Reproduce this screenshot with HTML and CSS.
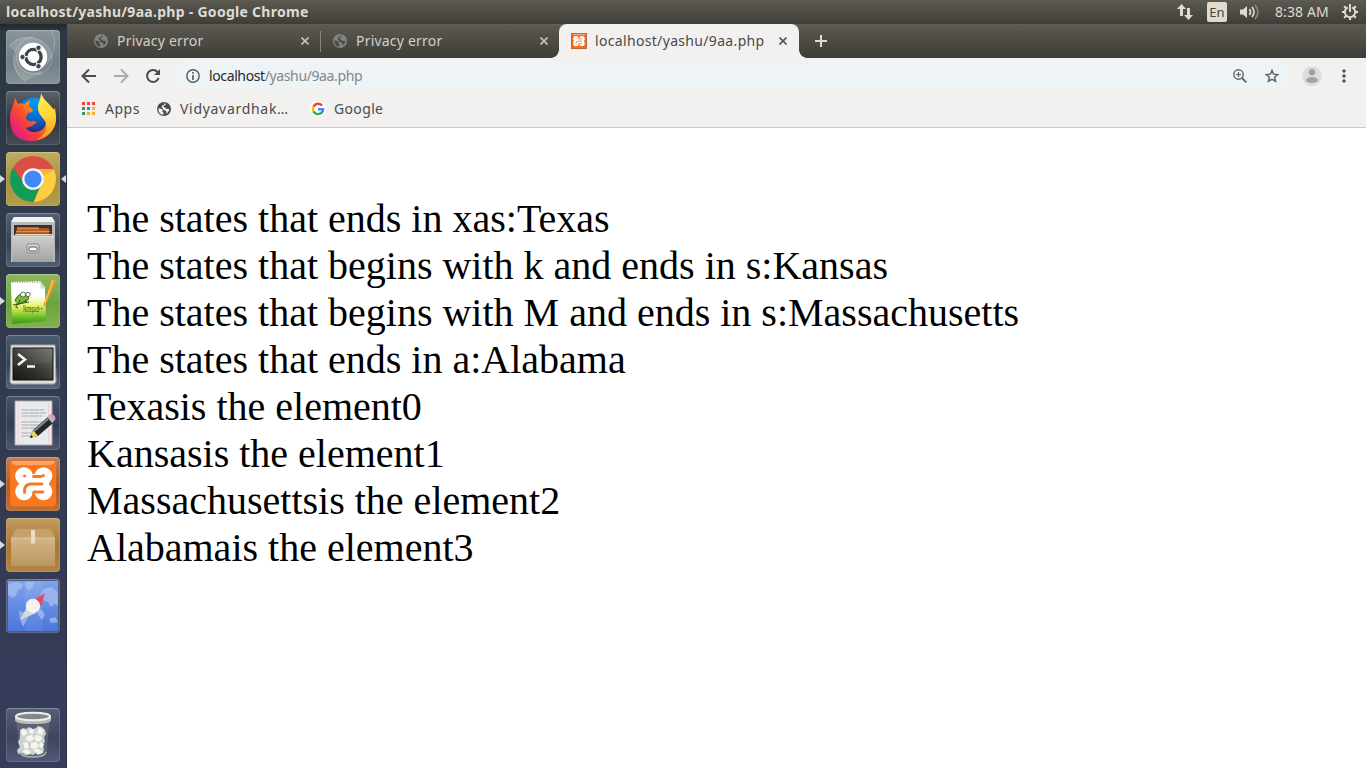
FILE: index.html
```html
<!DOCTYPE html>
<html lang="en">
<head>
<meta charset="utf-8">
<title>localhost/yashu/9aa.php</title>
<link rel="stylesheet" href="styles.css">
</head>
<body>
<svg class="defs" width="0" height="0" aria-hidden="true">
  <symbol id="globe" viewBox="0 0 14 14"><circle cx="7" cy="7" r="7" fill="currentColor"/><path class="cut" d="M1.500 6.200L4.400 7c1 .2 1.500.8 1.300 1.700L5.200 10l1.500.6-.5 2.100C3 12.400 1 9.500 1.500 6.200ZM7 1.500l1.600.3-.1 1.200-1.700.8-.3 1.500 1.700.3 1.200 1.500 1.800-.4 1 .8c-.4 2-1.400 3.500-3 4.300l.3-2.100-1.100-1.300-1.900-.3-.4-1.700-1.500-.8.5-2.100L7 3z"/></symbol>
  <symbol id="close" viewBox="0 0 8 8"><path d="M.5.5l7 7M7.500.5l-7 7" fill="none" stroke="currentColor" stroke-width="1.600"/></symbol>
  <symbol id="xampp" viewBox="9 10 38 34"><g fill="#fff"><circle cx="18" cy="19" r="8.800"/><circle cx="18" cy="34.500" r="8.800"/><circle cx="37.500" cy="19" r="8.800"/><circle cx="37.500" cy="34.500" r="8.800"/><path d="M13 20h10l4-3h2l4 3h10v14H32l-3 3h-2l-4-3H13z"/></g><g fill="none" stroke="#f9771f" stroke-width="2.800" stroke-linecap="round"><path d="M18.500 19h.2M18.500 35.500v-2.500q.5-5.500 6-6h11.500M27.500 19.500h7q2 0 3-1M28 35h9"/><path d="M27.500 41v-6M27.500 12v4" stroke-width="2.200"/></g></symbol>
</svg>

<header class="panel">
  <span class="panel-title">localhost/yashu/9aa.php - Google Chrome</span>
  <div class="indicators">
    <svg class="i-net" width="18" height="18" viewBox="0 0 18 18"><path d="M5.500 1L10 6H7v7H4V6H1zM12.500 17L17 12h-3V5h-3v7H8z" fill="#dfdbd2"/></svg>
    <span class="lang">En</span>
    <svg class="i-vol" width="20" height="16" viewBox="0 0 20 16"><path d="M0 5.500h3L7 2v12L3 10.500H0z" fill="#dfdbd2"/><path d="M9.500 5q2 3 0 6M12 3q4 5 0 10" fill="none" stroke="#dfdbd2" stroke-width="1.700"/><path d="M15 1q6 7 0 14" fill="none" stroke="#8b8880" stroke-width="1.600"/></svg>
    <span class="clock">8:38 AM</span>
    <svg class="i-gear" width="16" height="16" viewBox="0 0 16 16"><g fill="none" stroke="#dfdbd2"><path d="M5.800 3.300a5.200 5.200 0 1 0 4.400 0" stroke-width="2"/><path d="M8 0v8" stroke-width="2"/><path d="M2.200 2.200l2 2M13.800 2.200l-2 2M0 8h3M13 8h3M2.200 13.800l2-2M13.800 13.800l-2-2M8 13v3" stroke-width="2.200"/></g></svg>
  </div>
</header>

<div class="desktop">
<nav class="launcher">
  <div class="tile dash"><svg viewBox="0 0 54 54"><g fill="none" stroke="#fff" stroke-opacity=".22" stroke-width="1"><path d="M3 16C16 0 45 8 46 27c0 10-7 17-15 18"/><path d="M27 7C7 10 0 37 19 51"/><path d="M14 17C4 32 18 48 36 43"/><path d="M45 0c9 17-2 34-10 40"/></g><path d="M3 16C16 0 45 8 46 27l-5 7L13 26zM19 51C0 37 8 20 18 17l18 26z" fill="#fff" opacity=".16"/><circle cx="27" cy="28" r="14.500" fill="#4f5c61" opacity=".5"/><circle cx="27" cy="27" r="14.300" fill="#fff"/><circle cx="27.500" cy="27" r="7.600" fill="none" stroke="#3b4648" stroke-width="3.200" stroke-dasharray="14.700 1.200" stroke-dashoffset="7"/><g fill="#3b4648" stroke="#fff" stroke-width="1"><circle cx="16.500" cy="27" r="2.700"/><circle cx="32.500" cy="17.800" r="2.700"/><circle cx="32.500" cy="36.300" r="2.700"/></g></svg></div>

  <div class="tile fox"><svg viewBox="0 0 54 54"><defs><linearGradient id="ff" x1=".8" y1=".1" x2=".1" y2=".7"><stop offset="0" stop-color="#ffb52a"/><stop offset=".35" stop-color="#ff8a25"/><stop offset=".65" stop-color="#fb4a2c"/><stop offset="1" stop-color="#e82373"/></linearGradient><linearGradient id="fy" x1=".2" y1="0" x2=".4" y2="1"><stop stop-color="#fff35a"/><stop offset=".55" stop-color="#ffd433"/><stop offset="1" stop-color="#ff981d"/></linearGradient><radialGradient id="fb" cx=".55" cy=".1" r=".9"><stop stop-color="#089fe8"/><stop offset=".5" stop-color="#0871d2"/><stop offset="1" stop-color="#252b87"/></radialGradient></defs><circle cx="28" cy="24" r="17.500" fill="url(#fb)"/><path d="M9 7l3 6c2-1 4-1 6 0l6-4-1 6 4 4-1 2-4 1-2 4c0 3 3 5 7 4l4 1-5 4-6 2c4 6 14 5 18 0 2-3 3-8 2-12l9-8c4 19-6 33-23 33S4 40 4 27c0-7 3-10 5-20z" fill="url(#ff)"/><path d="M35 2c1 4 4 7 8 11 5 5 8 10 7 17-1 10-10 17-20 19 9-4 12-11 10-17-2-5-8-8-8-15 0-6 3-9 3-15z" fill="url(#fy)"/></svg></div>

  <div class="tile chrome run active"><svg viewBox="0 0 54 54"><clipPath id="cc"><circle cx="27" cy="27" r="23"/></clipPath><g clip-path="url(#cc)"><path d="M0 0h54v17H27l-10 16L0 18z" fill="#d94f43"/><path d="M7 15L18 32l10 5 6-4-8 21H0V15z" fill="#119d58"/><path d="M27 17h27v37H26l9-20z" fill="#ffcd42"/><path d="M27 17h24l-14 7z" fill="#d9a72d" opacity=".5"/></g><circle cx="27" cy="27" r="10.800" fill="#f4f6f8"/><circle cx="27" cy="27" r="8.600" fill="#4487f4"/></svg></div>

  <div class="tile files"><svg viewBox="0 0 54 54"><defs><linearGradient id="cab" x2="0" y2="1"><stop stop-color="#cfcfcd"/><stop offset="1" stop-color="#a2a2a0"/></linearGradient></defs><path d="M8 4h38l3 5v40H5V9z" fill="#b9b9b7"/><path d="M8 4h38l3 5H5z" fill="#f3f3f1"/><path d="M8 12h38v11H8z" fill="#38322f"/><path d="M11 14h21l1 1h10v8H10z" fill="#a95426"/><path d="M11 15.500h22M10 18.500h34" stroke="#e18a42" stroke-width="1.300"/><path d="M9 21h37v1H9z" fill="#ece1c8"/><path d="M6.500 23h41v26h-41z" fill="url(#cab)"/><path d="M6.500 23h41" stroke="#ededeb"/><rect x="21" y="31" width="12" height="9" rx="2" fill="#dadad8" stroke="#898987"/><rect x="23" y="34" width="8" height="4" rx="1" fill="#fff" stroke="#555"/></svg></div>

  <div class="tile notepad run"><svg viewBox="0 0 54 54"><defs><linearGradient id="np" x2="0" y2="1"><stop offset=".35" stop-color="#fff"/><stop offset=".6" stop-color="#e9ef60"/><stop offset=".85" stop-color="#67bc23"/><stop offset="1" stop-color="#3f9221"/></linearGradient></defs><path d="M5 8l29-1 5 7 1 33-34 3z" fill="url(#np)"/><path d="M34 7l1 8 5-1z" fill="#d4d7d0"/><path d="M6 8h28" stroke="#a5ad9c" stroke-width="2" stroke-dasharray="1 1.500"/><path d="M9 27c2-6 6-8 11-6 4 2 3 5 0 6l-7 3c-4 1-4 4-1 4" fill="#79b834" stroke="#345321" stroke-width="1"/><path d="M7 31l16-3M14 26l-2 5M19 26l2 3" stroke="#345321" stroke-width="1"/><circle cx="17" cy="20.500" r="2.500" fill="#fff" stroke="#345321" stroke-width=".8"/><circle cx="22" cy="20.500" r="2.200" fill="#fff" stroke="#345321" stroke-width=".8"/><text x="17" y="37.500" class="npad" textLength="20" lengthAdjust="spacingAndGlyphs">Notepad++</text><path d="M37 34l1-5 8-24 4 2-10 23z" fill="#f39b25"/><path d="M39 29l8-23" stroke="#ffd35c" stroke-width="1"/><path d="M46 5q2-3 4 2z" fill="#e98280"/></svg></div>

  <div class="tile terminal"><svg viewBox="0 0 54 54"><defs><linearGradient id="tm" x1="1" x2="0" y2="1"><stop stop-color="#74746f"/><stop offset=".55" stop-color="#343432"/><stop offset="1" stop-color="#151515"/></linearGradient></defs><path d="M5 10h44l1 37-2 2H6l-2-2z" fill="#deded9" stroke="#a1a5a9"/><path d="M7 13h40v32H7z" fill="url(#tm)" stroke="#111"/><path d="M7 13h39v14L7 32z" fill="#fff" opacity=".06"/><path d="M12 19l7 5.500-7 5.500M21 31.500h8" stroke="#f2f2ef" stroke-width="2.500" fill="none"/></svg></div>

  <div class="tile editor"><svg viewBox="0 0 54 54"><path d="M9 5h37v44H9z" fill="#e9eaec" stroke="#a5a8ad"/><path d="M12.500 5v44M42.500 5v44" stroke="#f3d0d2"/><path d="M15.500 14h23M15.500 17h25M15.500 20h21M15.500 26h24M15.500 29h23M15.500 32h18M15.500 37h10M15.500 40h9" stroke="#bcbfc4" stroke-width="1.600" stroke-dasharray="7 .6 10 .6"/><path d="M24 42l3-8 15-13 5 6-15 13z" fill="#252729"/><path d="M28 35l14-12" stroke="#858b8f" stroke-width="2"/><path d="M24 42l3-8 5 6z" fill="#e5d866"/><path d="M24 42l1-3 2 2z" fill="#111"/><path d="M41 21l2-2 6 5-3 3z" fill="#b8babb"/><path d="M43 19c2-3 8 1 6 5z" fill="#ed93c4"/></svg></div>

  <div class="tile xampp run"><svg viewBox="0 0 54 54"><rect x="4" y="3.500" width="46" height="46" rx="4" fill="#f9771f"/><path d="M5 4h44q-1 4-6 4H11Q6 8 5 4z" fill="#ffc59a" opacity=".6"/><use href="#xampp" x="9" y="10" width="38" height="34"/></svg></div>

  <div class="tile box run"><svg viewBox="0 0 54 54"><defs><linearGradient id="bx" x2="0" y2="1"><stop stop-color="#d3b587"/><stop offset="1" stop-color="#bb955f"/></linearGradient></defs><path d="M10 11h35l4 10v28H5V21z" fill="#ac8048"/><path d="M10 11h35l4 9H5z" fill="#c6a06a"/><path d="M5 20h44v28H5z" fill="url(#bx)"/><path d="M5 20h44" stroke="#dec69d"/><path d="M25 12h4v13.500h-4z" fill="#eadcc0"/></svg></div>

  <div class="tile maps"><svg viewBox="0 0 54 54"><defs><linearGradient id="sea" x2="0" y2="1"><stop stop-color="#7ea3ea"/><stop offset="1" stop-color="#4c76dc"/></linearGradient></defs><path d="M2 2h50v50H2z" fill="url(#sea)"/><path d="M19 2h17v50H19z" fill="#fff" opacity=".07"/><path d="M2 5l9-2 6 2-1 4-4 2-2 5-3 3-5-3zM19 3h10l-2 5-4 4-4-5zM34 16l3-6 8-2 7 5v13l-4-1-3 3-3-5-5-2zM13 32l7 2 2 4-5 10-3-8zM30 30l6 1 3 5-3 5-4-5zM43 40l6-2 3 5-7 1z" fill="#a9c1f3" opacity=".7"/><path d="M39 14L35 27l-7-6z" fill="#ef4557"/><path d="M14 41l7-13 9 6z" fill="#d6d8da"/><circle cx="27" cy="27" r="7.200" fill="#f2f3f2"/></svg></div>

  <div class="tile trash"><svg viewBox="0 0 54 54"><path d="M11 10l3 35q1 4 13 4t13-4l3-35z" fill="#8b939d" opacity=".3" stroke="#aeb3b8" stroke-width=".8"/><path d="M14 22l3-2 3 1 3-2 4 2 3-1 2-2 4 1 3 3 1 4-2 3 1 5-3 3 2 4-1 4-3 1-4-1-3 2-4-1-4 1-3-2-4 1-1-4 3-3-2-5 2-4z" fill="#cfd2cd"/><g fill="#f4f5f1"><path d="M16 21l4 1 1 4-4 2-2-3zM24 20l4 2-1 4-4-1zM33 19l5 3-2 5-5-2zM21 28l5-1 2 4-4 3-4-2zM30 27l5 1 1 4-5 2-3-4zM17 35l4-1 2 5-4 2zM25 35l5-1 3 3-3 4-5-1zM34 34l4 2-1 4-4-1zM16 43l5-2 4 3-3 3zM27 42l5-1 5 3-5 3z"/></g><path d="M14 44q1 5 13 5t13-5" fill="none" stroke="#a9afaf" stroke-width="1.300"/><path d="M9 8v4q0 4 18 4t18-4V8z" fill="#b9bbb6"/><ellipse cx="27" cy="8.500" rx="17" ry="3.700" fill="#81878a" stroke="#eeeeeb" stroke-width="2"/></svg></div>
</nav>

<main class="browser">
  <div class="tabs">
    <div class="tab t1"><svg class="globe"><use href="#globe"/></svg><span>Privacy error</span><svg class="x"><use href="#close"/></svg></div>
    <div class="tab t2"><svg class="globe"><use href="#globe"/></svg><span>Privacy error</span><svg class="x"><use href="#close"/></svg></div>
    <div class="tab current"><svg class="fav" viewBox="0 0 16 16"><rect width="16" height="16" rx="1" fill="#f37022"/><path d="M.5.5h15v15H.5z" fill="none" stroke="#b9653a"/><path d="M2 1.500h12" stroke="#ffb183"/><use href="#xampp" x="2" y="3" width="12" height="10.500"/></svg><span>localhost/yashu/9aa.php</span><svg class="x"><use href="#close"/></svg></div>
    <svg class="plus" width="12" height="12" viewBox="0 0 12 12"><path d="M6 0v12M0 6h12" stroke="#dfdbd2" stroke-width="2"/></svg>
  </div>

  <div class="toolbar">
    <svg class="back" width="16" height="16" viewBox="0 0 16 16"><path d="M15 8H2M8 1.500L1.500 8 8 14.500" fill="none" stroke="#4a4b4c" stroke-width="2"/></svg>
    <svg class="fwd" width="16" height="16" viewBox="0 0 16 16"><path d="M1 8h13M8 1.500L14.500 8 8 14.500" fill="none" stroke="#acabaa" stroke-width="2"/></svg>
    <svg class="reload" width="16" height="16" viewBox="0 0 16 16"><path d="M13 4.500A6 6 0 1 0 13.700 10" fill="none" stroke="#4a4b4c" stroke-width="2"/><path d="M15 1v6H9z" fill="#4a4b4c"/></svg>
    <div class="omnibox">
      <svg width="14" height="14" viewBox="0 0 14 14"><circle cx="7" cy="7" r="6.200" fill="none" stroke="#56595c" stroke-width="1.400"/><path d="M7 6v5M7 3v1.800" stroke="#56595c" stroke-width="1.600"/></svg>
      <span class="url">localhost<i>/yashu/9aa.php</i></span>
      <svg class="mag" width="14" height="14" viewBox="0 0 14 14"><g fill="none" stroke="#5f6368"><circle cx="5.500" cy="5.500" r="4.700" stroke-width="1.400"/><path d="M9 9l4.300 4.300" stroke-width="1.800"/><path d="M3 5.500h5M5.500 3v5" stroke-width="1.200"/></g></svg>
      <svg class="star" width="14" height="14" viewBox="0 0 14 14"><path d="M7 1.300l1.600 3.900 4.200.3-3.200 2.700 1 4.200L7 10.200l-3.600 2.200 1-4.200-3.200-2.700 4.200-.3z" fill="none" stroke="#5a5d61" stroke-width="1.400"/></svg>
    </div>
    <svg class="avatar" width="20" height="20" viewBox="0 0 20 20"><circle cx="10" cy="10" r="10" fill="#dedddc"/><circle cx="10" cy="6.200" r="3.200" fill="#a1a1a1"/><ellipse cx="10" cy="14" rx="6" ry="3" fill="#a1a1a1"/></svg>
    <svg class="dots" width="4" height="14" viewBox="0 0 4 14"><g fill="#4a4b4c"><circle cx="2" cy="2" r="1.650"/><circle cx="2" cy="7" r="1.650"/><circle cx="2" cy="12" r="1.650"/></g></svg>
  </div>

  <div class="bookmarks">
    <svg class="apps" width="14" height="14" viewBox="0 0 14 14"><path d="M0 0h3v3H0zM5 0h3v3H5zM10 0h3v3h-3z" fill="#f43f3b"/><path d="M0 5h3v3H0zM0 10h3v3H0z" fill="#25a05a"/><path d="M5 5h3v3H5z" fill="#2f7de9"/><path d="M10 5h3v3h-3zM5 10h3v3H5zM10 10h3v3h-3z" fill="#faab28"/></svg>
    <span class="b-apps">Apps</span>
    <svg class="globe dark"><use href="#globe"/></svg>
    <span class="b-vid">Vidyavardhak…</span>
    <svg class="goog" width="16" height="16" viewBox="0 0 16 16"><circle cx="8" cy="8" r="8" fill="#fff"/><g fill="none" stroke-width="2.400"><path d="M12 4.600A5.100 5.100 0 0 0 3.500 5.600" stroke="#ea4335"/><path d="M3.500 5.500a5.100 5.100 0 0 0 0 5" stroke="#fbbc05"/><path d="M3.500 10.400A5.100 5.100 0 0 0 11.600 11.700" stroke="#34a853"/><path d="M11.500 11.800A5 5 0 0 0 13.100 8.200H8" stroke="#4285f4"/></g></svg>
    <span class="b-goog">Google</span>
  </div>

  <article class="page">
    <div>The states that ends in xas:Texas</div>
    <div>The states that begins with k and ends in s:Kansas</div>
    <div>The states that begins with M and ends in s:Massachusetts</div>
    <div>The states that ends in a:Alabama</div>
    <div>Texasis the element0</div>
    <div>Kansasis the element1</div>
    <div>Massachusettsis the element2</div>
    <div>Alabamais the element3</div>
  </article>
</main>
</div>
</body>
</html>
```
FILE: styles.css
```css
* { box-sizing: border-box; }
html, body { margin: 0; height: 100%; overflow: hidden; }
body { width: 1366px; height: 768px; display: flex; flex-direction: column; font-family: "Noto Sans", "Open Sans", sans-serif; font-size: 14px; }
svg { display: block; flex: none; }
.defs { position: absolute; }
span { white-space: nowrap; }

.panel { height: 24px; flex: none; display: flex; align-items: center; justify-content: space-between; background: linear-gradient(#5f5d50 0, #59574f 2px, #403f3a 23px, #3c3b37); color: #dfdbd2; }
.panel-title { margin-left: 6px; font-weight: 700; font-size: 14px; line-height: 24px; letter-spacing: .28px; }
.indicators { display: flex; align-items: center; height: 24px; }
.i-net { margin-right: 13px; }
.lang { width: 20px; height: 20px; line-height: 20px; border-radius: 2px; background: #dfdbd2; color: #45443f; text-align: center; font-size: 13px; margin-right: 13px; }
.i-vol { margin-right: 15px; }
.clock { width: 54px; margin-right: 13px; line-height: 24px; font-size: 14px; letter-spacing: .1px; }
.i-gear { margin-right: 8px; }

.desktop { flex: 1; display: flex; min-height: 0; }
.launcher { width: 67px; flex: none; padding: 6px 0 6px 6px; display: flex; flex-direction: column; gap: 7px; background: linear-gradient(90deg, transparent 66px, #2b3044 66px), linear-gradient(#22282d 0, #2d3843 7px, #303a4b 200px, #333a54 500px, #373c5b); }
.tile { width: 54px; height: 54px; flex: none; border-radius: 4px; position: relative; box-shadow: inset 0 0 0 1px rgba(210,220,235,.15), inset 0 1px 1px rgba(255,255,255,.2); }
.tile svg { width: 54px; height: 54px; }
.dash { background: linear-gradient(#89959a, #718087 60%, #879398); }
.fox { background: linear-gradient(#5d6268, #30363d 55%, #454d57); }
.chrome { background: linear-gradient(#c0ab5f, #a9923e 55%, #b39c4c); }
.files { background: linear-gradient(#536071, #354154 55%, #526075); }
.notepad { background: linear-gradient(#8eb85e, #6ca340 55%, #82b14f); }
.terminal { background: linear-gradient(#4d5b70, #354259 55%, #56647b); }
.editor { background: linear-gradient(#485268, #343d54 55%, #4e586d); }
.xampp { background: linear-gradient(#c08058, #b75c23 55%, #bd7037); }
.box { background: linear-gradient(#c39a60, #a97831 55%, #b38642); }
.maps { background: #4b5a75; }
.trash { margin-top: auto; background: linear-gradient(#565d77, #3e4560 55%, #525974); }
.run::before, .active::after { content: ""; position: absolute; top: 23px; border: 4px solid transparent; }
.run::before { left: -6px; border-left: 5px solid #d8d9dc; border-right: 0; }
.active::after { right: -6px; border-right: 5px solid #d8d9dc; border-left: 0; }
.npad { font: 8px "Noto Sans", sans-serif; fill: #345319; }

.browser { flex: 1; min-width: 0; background: #fff; display: flex; flex-direction: column; }
.tabs { height: 34px; flex: none; display: flex; align-items: center; padding-left: 14px; background: linear-gradient(#67665a 0, #5b5950 1px, #3e3d38); color: #d3cfc7; }
.tab { height: 34px; width: 239px; display: flex; align-items: center; padding: 0 11px 0 13px; position: relative; }
.tab span { flex: 1; line-height: 34px; }
.t1 span, .t2 span { letter-spacing: .2px; }
.t1::after { content: ""; position: absolute; right: -1px; top: 7px; width: 1px; height: 21px; background: #88867c; }
.globe { width: 14px; height: 14px; color: #85847f; margin-right: 9px; }
.cut { fill: var(--c, #4d4c46); }
.x { width: 8px; height: 8px; color: #c6c3bb; }
.current { width: 240px; padding: 0 12px; background: #f2f1f0; color: #49494a; border-radius: 8px 8px 0 0; }
.current span { letter-spacing: .33px; }
.current::before, .current::after { content: ""; position: absolute; bottom: 0; width: 8px; height: 8px; }
.current::before { left: -8px; background: radial-gradient(circle at 0 0, transparent 7.500px, #f2f1f0 8px); }
.current::after { right: -8px; background: radial-gradient(circle at 100% 0, transparent 7.500px, #f2f1f0 8px); }
.current .x { color: #55565a; }
.fav { width: 16px; height: 16px; margin-right: 8px; }
.plus { margin-left: 16px; }

.toolbar { height: 35px; flex: none; padding: 0 20px 0 14px; display: flex; align-items: center; background: #f2f1f0; }
.fwd, .reload { margin-left: 16px; }
.omnibox { height: 29px; flex: 1; margin-left: 14px; margin-right: 12px; border-radius: 15px; background: #eef3f5; display: flex; align-items: center; padding: 0 11px; color: #26282a; }
.url { margin-left: 9px; line-height: 29px; font-size: 14px; letter-spacing: -.38px; }
.url i { font-style: normal; color: #81868a; }
.mag { margin-left: auto; }
.star { margin-left: 18px; }
.dots { margin-left: 20px; }

.bookmarks { height: 35px; flex: none; padding: 0 0 3px 15px; display: flex; align-items: center; background: #f2f1f0; color: #4b4b4c; border-bottom: 1px solid #cac9c7; }
.bookmarks span { line-height: 31px; }
.b-apps { width: 52px; margin-left: 9px; letter-spacing: .5px; }
.bookmarks .globe { color: #494a4b; }
.dark { --c: #f2f1f0; }
.b-vid { width: 130px; letter-spacing: .7px; }
.b-goog { letter-spacing: .35px; }
.goog { margin-right: 8px; }

.page { flex: 1; padding: 67px 0 0 20px; color: #000; font-family: "Liberation Serif", serif; font-size: 40px; line-height: 47px; white-space: nowrap; }
```
